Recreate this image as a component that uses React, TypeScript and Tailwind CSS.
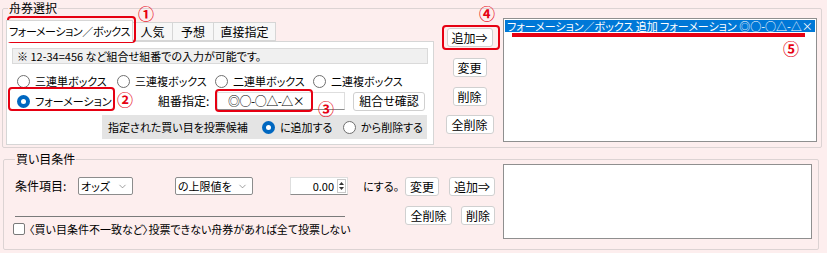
import { ChevronDown } from "lucide-react";

const font = "font-['Noto_Sans_CJK_JP','Noto_Sans',sans-serif] [font-feature-settings:'palt']";

function Radio({ checked, label }: { checked?: boolean; label: string }) {
  return (
    <span className="flex items-center gap-[5px]">
      {checked ? (
        <span className="flex h-[13px] w-[13px] items-center justify-center rounded-full bg-[#0067c0]">
          <span className="h-[5px] w-[5px] rounded-full bg-white" />
        </span>
      ) : (
        <span className="h-[13px] w-[13px] rounded-full border border-[#6f6f6f] bg-white" />
      )}
      <span>{label}</span>
    </span>
  );
}

function Btn({ label, className = "" }: { label: string; className?: string }) {
  return (
    <button
      className={`flex h-[19px] items-center justify-center rounded-[3px] border border-[#d0d0d0] bg-white px-[3px] text-[12px] leading-none text-black ${className}`}
    >
      {label}
    </button>
  );
}

function Select({ label, width }: { label: string; width: string }) {
  return (
    <div
      className={`flex h-[18px] items-center justify-between rounded-[2px] border border-[#8c8c8c] bg-white pl-[2px] pr-[4px] ${width}`}
    >
      <span>{label}</span>
      <ChevronDown size={11} strokeWidth={1.4} className="text-[#6b6b6b]" />
    </div>
  );
}

function Mark({ n, className }: { n: string; className: string }) {
  return (
    <span className={`absolute text-[16px] font-bold leading-none text-[#e60012] ${className}`}>{n}</span>
  );
}

export default function App() {
  return (
    <div className={`relative h-[253px] w-[827px] overflow-hidden whitespace-nowrap bg-[#fdeeee] text-[11px] leading-none text-black ${font}`}>
      {/* 舟券選択 */}
      <fieldset className="ml-[2px] h-[148px] w-[820px] rounded-[2px] border border-[#dcd3d3]">
        <legend className="ml-[5px] px-[1px] text-[12px] leading-[16px]">舟券選択</legend>
        <div className="flex pl-[3px]">
          {/* tabs */}
          <div className="flex w-[428px] flex-col pt-[3px]">
            <div className="flex h-[22px] items-end">
              <div className="relative z-10 -mb-px flex h-[22px] w-[127px] items-center justify-center border border-b-0 border-[#d6d6d6] bg-white tracking-[-0.4px]">
                フォーメーション／ボックス
              </div>
              <div className="flex h-[19px] w-[40px] items-center justify-center border border-l-0 border-[#d6d6d6] bg-[#f7f7f7] text-[12px]">人気</div>
              <div className="flex h-[19px] w-[41px] items-center justify-center border border-l-0 border-[#d6d6d6] bg-[#f7f7f7] text-[12px]">予想</div>
              <div className="flex h-[19px] w-[62px] items-center justify-center border border-l-0 border-[#d6d6d6] bg-[#f7f7f7] text-[12px]">直接指定</div>
            </div>
            <div className="flex h-[104px] flex-col border border-[#d6d6d6] bg-white">
              <div className="ml-[5px] mt-[6px] flex h-[16px] w-[416px] items-center border border-[#dadada] bg-[#f0f0f0] pl-[4px]">
                ※ 12-34=456 など組合せ組番での入力が可能です。
              </div>
              <div className="mt-[9px] flex h-[16px] items-center pl-[10px]">
                <span className="w-[100px]"><Radio label="三連単ボックス" /></span>
                <span className="w-[98px]"><Radio label="三連複ボックス" /></span>
                <span className="w-[98px]"><Radio label="二連単ボックス" /></span>
                <Radio label="二連複ボックス" />
              </div>
              <div className="flex h-[24px] items-center pl-[10px]">
                <span className="w-[141px]"><Radio checked label="フォーメーション" /></span>
                <span className="w-[59px] text-[12px]">組番指定:</span>
                <div className="flex h-[18px] w-[128px] items-center border border-[#dedede] border-b-[#8c8c8c] bg-white pl-[10px] text-[12px] tracking-[-0.5px]">
                  ◎○-○△-△×
                </div>
                <Btn label="組合せ確認" className="ml-[8px] w-[72px]" />
              </div>
              <div className="ml-[95px] mt-[2px] flex h-[24px] w-[325px] items-center bg-[#e4e4e4] pl-[6px]">
                <span className="w-[154px]">指定された買い目を投票候補</span>
                <span className="w-[81px]"><Radio checked label="に追加する" /></span>
                <Radio label="から削除する" />
              </div>
            </div>
          </div>
          {/* buttons */}
          <div className="ml-[8px] flex w-[55px] flex-col items-center pt-[12px]">
            <Btn label="追加⇒" className="w-[46px]" />
            <Btn label="変更" className="mt-[11px] w-[34px]" />
            <Btn label="削除" className="mt-[10px] w-[34px]" />
            <Btn label="全削除" className="mt-[9px] w-[48px]" />
          </div>
          {/* list */}
          <div className="ml-[6px] mt-[2px] h-[124px] w-[314px] border border-[#8f8f8f] bg-white p-[1px]">
            <div className="flex h-[12px] items-center bg-[#0078d7] pl-[2px] text-[11px] text-white">
              フォーメーション／ボックス 追加 フォーメーション ◎○-○△-△×
            </div>
          </div>
        </div>
      </fieldset>

      {/* 買い目条件 */}
      <fieldset className="ml-[3px] mt-[6px] h-[96px] w-[816px] rounded-[2px] border border-[#dcd3d3]">
        <legend className="ml-[11px] px-[1px] text-[12px] leading-[10px]">買い目条件</legend>
        <div className="flex">
          <div className="flex w-[401px] flex-col pl-[11px]">
            <div className="mt-[12px] flex h-[20px] items-center">
              <span className="w-[63px] text-[12px]">条件項目:</span>
              <Select label="オッズ" width="w-[55px]" />
              <span className="w-[42px]" />
              <Select label="の上限値を" width="w-[78px]" />
              <span className="w-[37px]" />
              <div className="flex h-[18px] w-[58px] items-center justify-end border border-[#dedede] border-b-[#8c8c8c] bg-white pr-[1px]">
                <span className="mr-[3px]">0.00</span>
                <span className="flex h-[14px] w-[9px] flex-col items-center justify-center gap-[2px] border border-[#c8c8c8]">
                  <svg width="5" height="3" viewBox="0 0 5 3"><path d="M0 3 L2.5 0 L5 3 Z" fill="#333" /></svg>
                  <svg width="5" height="3" viewBox="0 0 5 3"><path d="M0 0 L2.5 3 L5 0 Z" fill="#333" /></svg>
                </span>
              </div>
              <span className="ml-[15px]">にする。</span>
            </div>
            <div className="mt-[20px] h-px w-[330px] bg-[#7a7a7a]" />
            <div className="-ml-[2px] mt-[5px] flex h-[14px] items-center gap-[4px]">
              <span className="h-[12px] w-[12px] rounded-[2px] border border-[#7a7a7a] bg-white" />
              <span>〈買い目条件不一致など〉投票できない舟券があれば全て投票しない</span>
            </div>
          </div>
          <div className="flex w-[90px] flex-col pt-[13px]">
            <div className="flex justify-between">
              <Btn label="変更" className="w-[34px]" />
              <Btn label="追加⇒" className="w-[46px]" />
            </div>
            <div className="mt-[10px] flex justify-between">
              <Btn label="全削除" className="w-[47px]" />
              <Btn label="削除" className="w-[34px]" />
            </div>
          </div>
          <div className="ml-[8px] h-[75px] w-[309px] border border-[#8f8f8f] bg-white" />
        </div>
      </fieldset>

      {/* annotations */}
      <span className="absolute left-[7px] top-[16px] h-[27px] w-[129px] rounded-[4px] border-[2.5px] border-[#e60012]" />
      <span className="absolute left-[8px] top-[87px] h-[24px] w-[107px] rounded-[4px] border-[2.5px] border-[#e60012]" />
      <span className="absolute left-[215px] top-[89px] h-[23px] w-[98px] rounded-[4px] border-[2.5px] border-[#e60012]" />
      <span className="absolute left-[442px] top-[25px] h-[25px] w-[58px] rounded-[4px] border-[2.5px] border-[#e60012]" />
      <span className="absolute left-[512px] top-[33px] h-[4px] w-[293px] bg-[#e60012]" />
      <Mark n="①" className="left-[138px] top-[5px]" />
      <Mark n="②" className="left-[117px] top-[91px]" />
      <Mark n="③" className="left-[318px] top-[100px]" />
      <Mark n="④" className="left-[479px] top-[5px]" />
      <Mark n="⑤" className="left-[783px] top-[40px]" />
    </div>
  );
}
